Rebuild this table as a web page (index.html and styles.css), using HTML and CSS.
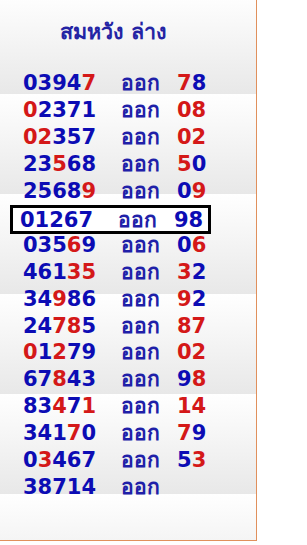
FILE: index.html
```html
<!DOCTYPE html>
<html lang="th">
<head>
<meta charset="utf-8">
<link rel="stylesheet" href="styles.css">
</head>
<body>
<div class="panel">
  <h1 class="title">สมหวัง ล่าง</h1>
  <div class="list">
    <div class="row"><span class="num">0394<i>7</i></span><span class="out">ออก</span><span class="res"><i>7</i>8</span></div>
    <div class="row"><span class="num"><i>0</i>2371</span><span class="out">ออก</span><span class="res"><i>08</i></span></div>
    <div class="row"><span class="num"><i>02</i>357</span><span class="out">ออก</span><span class="res"><i>02</i></span></div>
    <div class="row"><span class="num">23<i>5</i>68</span><span class="out">ออก</span><span class="res"><i>5</i>0</span></div>
    <div class="row"><span class="num">2568<i>9</i></span><span class="out">ออก</span><span class="res">0<i>9</i></span></div>
    <div class="row boxed"><span class="num">01267</span><span class="out">ออก</span><span class="res">98</span></div>
    <div class="row"><span class="num">035<i>6</i>9</span><span class="out">ออก</span><span class="res">0<i>6</i></span></div>
    <div class="row"><span class="num">461<i>35</i></span><span class="out">ออก</span><span class="res"><i>3</i>2</span></div>
    <div class="row"><span class="num">34<i>9</i>86</span><span class="out">ออก</span><span class="res"><i>9</i>2</span></div>
    <div class="row"><span class="num">24<i>78</i>5</span><span class="out">ออก</span><span class="res"><i>87</i></span></div>
    <div class="row"><span class="num"><i>0</i>1<i>2</i>79</span><span class="out">ออก</span><span class="res"><i>02</i></span></div>
    <div class="row"><span class="num">67<i>8</i>43</span><span class="out">ออก</span><span class="res">9<i>8</i></span></div>
    <div class="row"><span class="num">83<i>4</i>7<i>1</i></span><span class="out">ออก</span><span class="res"><i>14</i></span></div>
    <div class="row"><span class="num">341<i>7</i>0</span><span class="out">ออก</span><span class="res"><i>7</i>9</span></div>
    <div class="row"><span class="num">0<i>3</i>467</span><span class="out">ออก</span><span class="res">5<i>3</i></span></div>
    <div class="row"><span class="num">38714</span><span class="out">ออก</span><span class="res"></span></div>
  </div>
</div>
</body>
</html>
```

FILE: styles.css
```css
html, body {
  margin: 0;
  padding: 0;
  background: #ffffff;
}

.panel {
  width: 256px;
  height: 540px;
  border-right: 1px solid #e0905c;
  border-bottom: 1px solid #e0905c;
  background-image: linear-gradient(#ffffff, #e8e8e8);
  background-size: 100% 100px;
  background-position: 0 -6px;
  background-repeat: repeat-y;
  font-family: Tahoma, "DejaVu Sans", sans-serif;
  font-weight: bold;
}

.title {
  margin: 0;
  padding-top: 19px;
  height: 50px;
  box-sizing: border-box;
  text-align: center;
  font-size: 21.5px;
  line-height: 26px;
  color: #2424a4;
  padding-right: 30px;
}

.list {
  padding-top: 20px;
}

.row {
  display: grid;
  grid-template-columns: 84px 66px auto;
  height: 26.9px;
  align-items: stretch;
  padding-left: 23px;
  width: 200px;
  box-sizing: border-box;
  color: #0c0cb4;
  font-size: 21px;
  line-height: 22px;
}

.row > span {
  display: flex;
  align-items: center;
}

.row i {
  font-style: normal;
  color: #d41818;
}

.out {
  font-size: 21px;
  padding-left: 14px;
  color: #2020a8;
}

.res {
  padding-left: 4px;
}

.boxed {
  margin: 1px 0 -3px 10px;
  padding-left: 7px;
  width: 201px;
  height: 29px;
  border: 3px solid #000000;
  background: #ffffff;
}
```
